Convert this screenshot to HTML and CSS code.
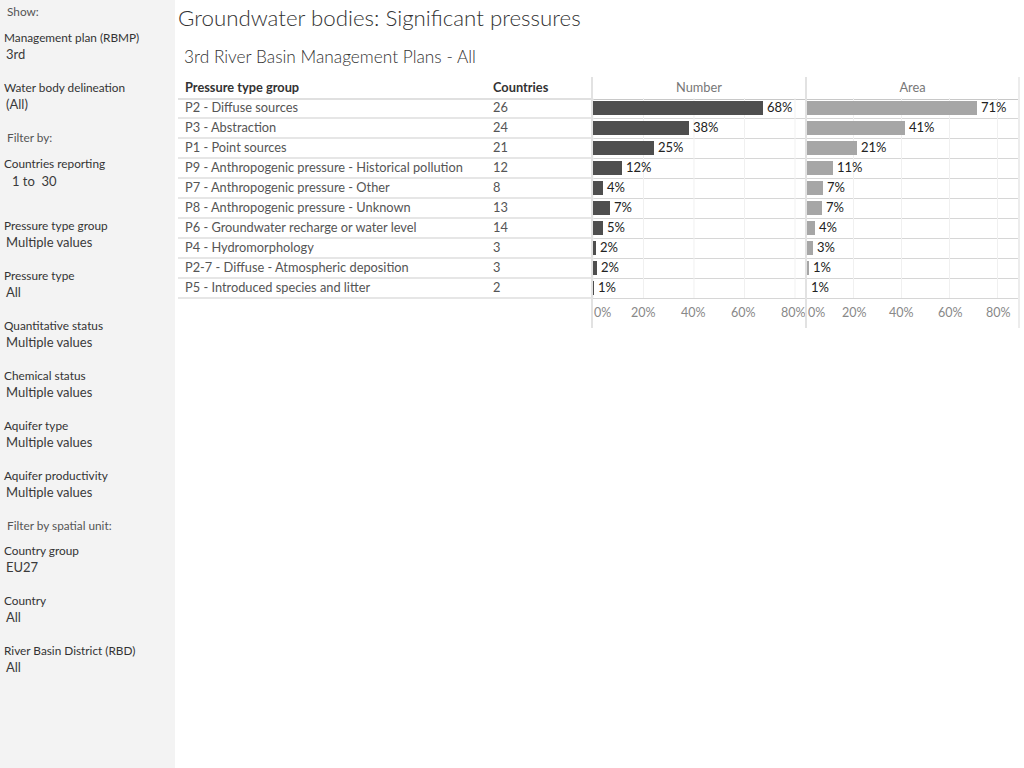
FILE: index.html
```html
<!DOCTYPE html>
<html lang="en">
<head>
  <meta charset="UTF-8" />
  <title>Groundwater bodies: Significant pressures</title>
  <link rel="stylesheet" href="styles.css">
</head>
<body>

  <div class="sidebar">
    <div class="heading first">Show:</div>
    <div class="filter">
      <div class="filter-label">Management plan (RBMP)</div>
      <div class="filter-value">3rd</div>
    </div>
    <div class="filter">
      <div class="filter-label">Water body delineation</div>
      <div class="filter-value">(All)</div>
    </div>
    <div class="heading">Filter by:</div>
    <div class="filter tall">
      <div class="filter-label">Countries reporting</div>
      <div class="filter-value range">1 to&nbsp; 30</div>
    </div>
    <div class="filter">
      <div class="filter-label">Pressure type group</div>
      <div class="filter-value">Multiple values</div>
    </div>
    <div class="filter">
      <div class="filter-label">Pressure type</div>
      <div class="filter-value">All</div>
    </div>
    <div class="filter">
      <div class="filter-label">Quantitative status</div>
      <div class="filter-value">Multiple values</div>
    </div>
    <div class="filter">
      <div class="filter-label">Chemical status</div>
      <div class="filter-value">Multiple values</div>
    </div>
    <div class="filter">
      <div class="filter-label">Aquifer type</div>
      <div class="filter-value">Multiple values</div>
    </div>
    <div class="filter">
      <div class="filter-label">Aquifer productivity</div>
      <div class="filter-value">Multiple values</div>
    </div>
    <div class="heading short">Filter by spatial unit:</div>
    <div class="filter">
      <div class="filter-label">Country group</div>
      <div class="filter-value">EU27</div>
    </div>
    <div class="filter">
      <div class="filter-label">Country</div>
      <div class="filter-value">All</div>
    </div>
    <div class="filter">
      <div class="filter-label">River Basin District (RBD)</div>
      <div class="filter-value">All</div>
    </div>
  </div>

  <div class="main">
    <div class="titulo">Groundwater bodies: Significant pressures</div>
    <div class="subtitulo">3rd River Basin Management Plans - All</div>

    <div class="tabla">
      <div class="fila cabecera">
        <div class="col-nombre">Pressure type group</div>
        <div class="col-paises">Countries</div>
        <div class="col-num">Number</div>
        <div class="col-area">Area</div>
      </div>

      <div class="fila">
        <div class="col-nombre">P2 - Diffuse sources</div>
        <div class="col-paises">26</div>
        <div class="col-num"><span class="barra oscura" style="width:170px"></span><span class="pct">68%</span></div>
        <div class="col-area"><span class="barra clara" style="width:170px"></span><span class="pct">71%</span></div>
      </div>
      <div class="fila">
        <div class="col-nombre">P3 - Abstraction</div>
        <div class="col-paises">24</div>
        <div class="col-num"><span class="barra oscura" style="width:96px"></span><span class="pct">38%</span></div>
        <div class="col-area"><span class="barra clara" style="width:98px"></span><span class="pct">41%</span></div>
      </div>
      <div class="fila">
        <div class="col-nombre">P1 - Point sources</div>
        <div class="col-paises">21</div>
        <div class="col-num"><span class="barra oscura" style="width:61px"></span><span class="pct">25%</span></div>
        <div class="col-area"><span class="barra clara" style="width:50px"></span><span class="pct">21%</span></div>
      </div>
      <div class="fila">
        <div class="col-nombre">P9 - Anthropogenic pressure - Historical pollution</div>
        <div class="col-paises">12</div>
        <div class="col-num"><span class="barra oscura" style="width:29px"></span><span class="pct">12%</span></div>
        <div class="col-area"><span class="barra clara" style="width:26px"></span><span class="pct">11%</span></div>
      </div>
      <div class="fila">
        <div class="col-nombre">P7 - Anthropogenic pressure - Other</div>
        <div class="col-paises">8</div>
        <div class="col-num"><span class="barra oscura" style="width:10px"></span><span class="pct">4%</span></div>
        <div class="col-area"><span class="barra clara" style="width:16px"></span><span class="pct">7%</span></div>
      </div>
      <div class="fila">
        <div class="col-nombre">P8 - Anthropogenic pressure - Unknown</div>
        <div class="col-paises">13</div>
        <div class="col-num"><span class="barra oscura" style="width:17px"></span><span class="pct">7%</span></div>
        <div class="col-area"><span class="barra clara" style="width:15px"></span><span class="pct">7%</span></div>
      </div>
      <div class="fila">
        <div class="col-nombre">P6 - Groundwater recharge or water level</div>
        <div class="col-paises">14</div>
        <div class="col-num"><span class="barra oscura" style="width:10px"></span><span class="pct">5%</span></div>
        <div class="col-area"><span class="barra clara" style="width:8px"></span><span class="pct">4%</span></div>
      </div>
      <div class="fila">
        <div class="col-nombre">P4 - Hydromorphology</div>
        <div class="col-paises">3</div>
        <div class="col-num"><span class="barra oscura" style="width:3px"></span><span class="pct">2%</span></div>
        <div class="col-area"><span class="barra clara" style="width:6px"></span><span class="pct">3%</span></div>
      </div>
      <div class="fila">
        <div class="col-nombre">P2-7 - Diffuse - Atmospheric deposition</div>
        <div class="col-paises">3</div>
        <div class="col-num"><span class="barra oscura" style="width:4px"></span><span class="pct">2%</span></div>
        <div class="col-area"><span class="barra clara" style="width:2px"></span><span class="pct">1%</span></div>
      </div>
      <div class="fila">
        <div class="col-nombre">P5 - Introduced species and litter</div>
        <div class="col-paises">2</div>
        <div class="col-num"><span class="barra oscura" style="width:1px"></span><span class="pct">1%</span></div>
        <div class="col-area"><span class="barra clara" style="width:0px"></span><span class="pct">1%</span></div>
      </div>

      <div class="fila eje">
        <div class="col-nombre"></div>
        <div class="col-paises"></div>
        <div class="col-num">
          <span class="tick">0%</span><span class="tick">20%</span><span class="tick">40%</span><span class="tick">60%</span><span class="tick">80%</span>
        </div>
        <div class="col-area">
          <span class="tick">0%</span><span class="tick">20%</span><span class="tick">40%</span><span class="tick">60%</span><span class="tick">80%</span>
        </div>
      </div>
    </div>
  </div>

</body>
</html>
```

FILE: styles.css
```css
* {
  box-sizing: border-box;
}

body {
  margin: 0;
  display: flex;
  min-height: 768px;
  background: #ffffff;
  font-family: Lato, "Open Sans", sans-serif;
  color: #333;
  font-size: 12.8px;
}

/* Panel lateral de filtros */
.sidebar {
  width: 175px;
  flex: none;
  background-color: #f3f3f3;
  padding-left: 4px;
}

.heading {
  height: 26px;
  line-height: 16px;
  padding-left: 3px;
  font-size: 11.8px;
  color: #555;
}

.heading.first {
  margin-top: 4px;
}

.heading.short {
  height: 25px;
}

.filter {
  height: 50px;
}

.filter.tall {
  height: 62px;
}

.filter-label {
  line-height: 16px;
  font-size: 11.8px;
  color: #333;
}

.filter-value {
  line-height: 16px;
  padding-left: 2px;
  font-size: 13px;
  color: #3a3a3a;
}

.filter-value.range {
  padding-left: 8px;
  line-height: 18px;
}

/* Zona principal */
.main {
  flex: 1;
  padding-left: 3px;
}

.titulo {
  font-size: 22.3px;
  font-weight: 300;
  color: #333;
  margin-top: 5px;
  line-height: 26px;
}

.subtitulo {
  font-size: 17.3px;
  font-weight: 300;
  color: #333;
  margin-top: 16px;
  padding-left: 6px;
  line-height: 20px;
}

.tabla {
  margin-top: 10px;
  width: 842px;
}

.fila {
  display: grid;
  grid-template-columns: 312px 101px 214px 215px;
  height: 20px;
  line-height: 19px;
}

.fila > div {
  border-bottom: 1px solid #d6d6d6;
}

.col-nombre {
  padding-left: 7px;
  color: #555;
  white-space: nowrap;
}

.col-paises {
  padding-left: 3px;
  color: #555;
}

.fila .col-nombre,
.fila .col-paises {
  border-bottom: 2px solid #e6e6e6;
}

.col-num,
.col-area {
  display: flex;
  align-items: center;
  gap: 4px;
  border-left: 2px solid #e2e2e2;
  color: #222;
}

.col-num {
  background-image: linear-gradient(to right, #f0f0f0 1px, transparent 1px);
  background-size: 50.5px 100%;
  background-position: 50px 0;
}

.col-area {
  background-image: linear-gradient(to right, #f0f0f0 1px, transparent 1px);
  background-size: 48px 100%;
  background-position: 46px 0;
}

.col-area:last-child {
  border-right: 2px solid #ececec;
}

/* Cabecera */
.cabecera {
  height: 21px;
  line-height: 21px;
}

.cabecera .col-nombre,
.cabecera .col-paises {
  font-weight: bold;
  color: #333;
  border-bottom: 2px solid #e0e0e0;
}

.cabecera .col-num,
.cabecera .col-area {
  justify-content: center;
  align-items: flex-start;
  color: #777;
  background-image: none;
  border-bottom: 1px solid #c8c8c8;
}

/* Barras */
.barra {
  display: block;
  height: 14px;
  flex: none;
  margin-top: -1px;
}

.barra.oscura {
  background-color: #4e4e4e;
}

.barra.clara {
  background-color: #a6a6a6;
}

.pct {
  font-size: 13px;
  line-height: 16px;
  margin-top: -2px;
}

/* Eje de porcentajes */
.eje {
  height: 30px;
}

.eje > div,
.eje .col-nombre,
.eje .col-paises {
  border-bottom: none;
}

.eje .col-num,
.eje .col-area {
  background-image: none;
  display: block;
  position: relative;
  color: #888;
  font-size: 12.5px;
  line-height: 16px;
}

.tick {
  position: absolute;
  top: 7px;
}

.col-num .tick:nth-child(1) { left: 1px; }
.col-num .tick:nth-child(2) { left: 38px; }
.col-num .tick:nth-child(3) { left: 88px; }
.col-num .tick:nth-child(4) { left: 138px; }
.col-num .tick:nth-child(5) { left: 188px; }

.col-area .tick:nth-child(1) { left: 1px; }
.col-area .tick:nth-child(2) { left: 35px; }
.col-area .tick:nth-child(3) { left: 82px; }
.col-area .tick:nth-child(4) { left: 131px; }
.col-area .tick:nth-child(5) { left: 179px; }
```
